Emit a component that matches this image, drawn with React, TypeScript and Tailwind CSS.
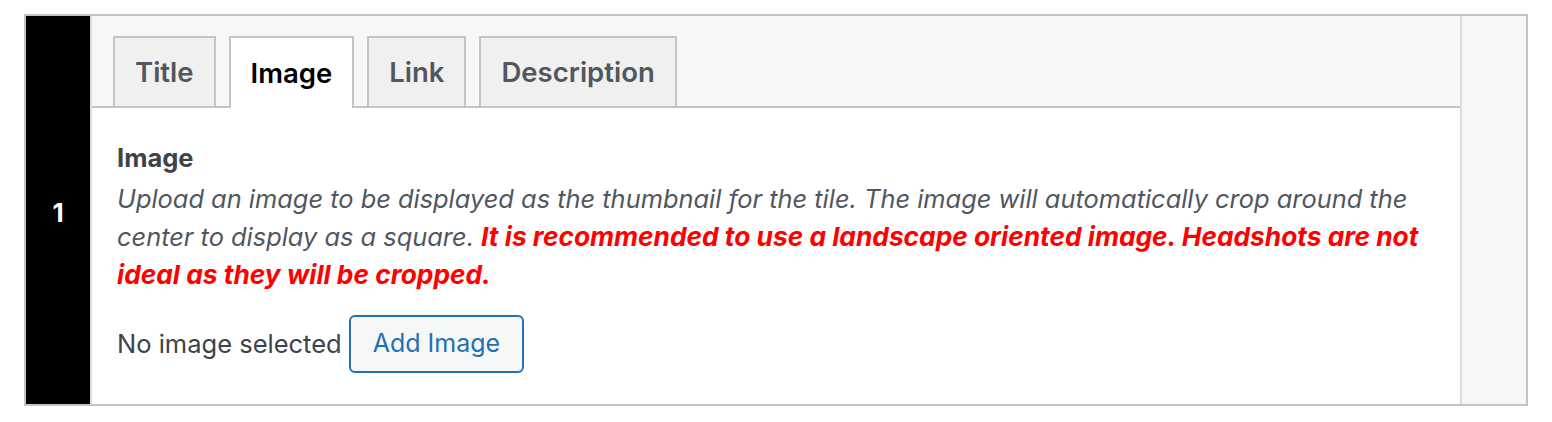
import React from "react";

const tabs = ["Title", "Image", "Link", "Description"];

export default function App() {
  return (
    <div className="bg-white w-[1552px] h-[422px] pt-[14px] pl-[24px]" style={{ fontFamily: "Inter, 'Noto Sans', sans-serif" }}>
      <div className="flex w-[1504px] h-[392px] border-2 border-[#c3c4c7]">
        <div className="w-[64px] bg-black flex items-center justify-center text-white font-bold text-[26px] pt-[5px]">
          1
        </div>
        <div className="w-[1370px] border-l-2 border-[#dcdcde] flex flex-col bg-white">
          <div className="h-[92px] bg-[#f7f7f7] border-b-2 border-[#c3c4c7] flex items-end pl-[21px] gap-[13px]">
            {tabs.map((t) => {
              const active = t === "Image";
              return (
                <div
                  key={t}
                  className={
                    active
                      ? "h-[72px] -mb-[2px] px-[20px] pt-[2px] flex items-center border-2 border-b-0 border-[#c3c4c7] bg-white text-black font-semibold text-[27.5px]"
                      : "h-[70px] px-[20px] pt-[2px] flex items-center border-2 border-b-0 border-[#c3c4c7] bg-[#f0f0f1] text-[#50575e] font-semibold text-[27.5px]"
                  }
                >
                  {t}
                </div>
              );
            })}
          </div>
          <div className="pl-[25px] pr-[25px] pt-[34px]">
            <div className="text-[25.5px] leading-[32px] font-bold text-[#3c434a]">Image</div>
            <p className="mt-[6px] text-[25.4px] leading-[38px] italic text-[#50575e]">
              Upload an image to be displayed as the thumbnail for the tile. The image will automatically crop around the center to display as a square.{" "}
              <span className="font-bold text-[26.3px] text-[#ff0000]">
                It is recommended to use a landscape oriented image. Headshots are not ideal as they will be cropped.
              </span>
            </p>
            <div className="mt-[21px] flex items-center gap-[7px]">
              <span className="text-[25.5px] text-[#3c434a]">No image selected</span>
              <button className="h-[58px] px-[22px] rounded-[6px] border-2 border-[#2271b1] bg-[#f6f7f7] text-[#2271b1] text-[25px]">
                Add Image
              </button>
            </div>
          </div>
        </div>
        <div className="w-[66px] border-l-2 border-[#dcdcde] bg-[#f7f7f7]" />
      </div>
    </div>
  );
}
